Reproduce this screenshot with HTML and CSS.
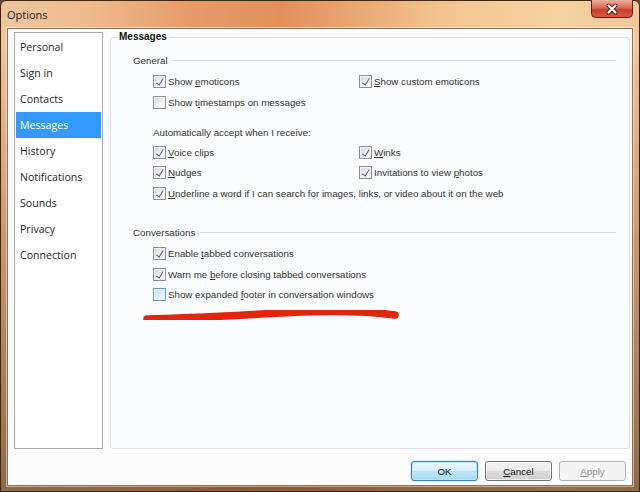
FILE: index.html
```html
<!DOCTYPE html>
<html lang="en">
<head>
  <meta charset="UTF-8">
  <title>Options</title>
  <link rel="stylesheet" href="styles.css">
</head>
<body>

<div class="window">
  <div class="titlebar">
    <span class="title">Options</span>
    <svg class="close-btn" width="42" height="18" viewBox="0 0 42 18">
      <defs>
        <linearGradient id="closeGrad" x1="0" y1="0" x2="0" y2="1">
          <stop offset="0" stop-color="#eab2a2"/>
          <stop offset="0.45" stop-color="#d86a55"/>
          <stop offset="0.55" stop-color="#c8412c"/>
          <stop offset="1" stop-color="#d9593c"/>
        </linearGradient>
      </defs>
      <path d="M0.5 0 V13.5 Q0.5 17.5 4.5 17.5 H37.5 Q41.5 17.5 41.5 13.5 V0" fill="url(#closeGrad)" stroke="#5e2418"/>
      <path d="M17.5 5.5 L24.5 12.5 M24.5 5.5 L17.5 12.5" stroke="#4a1d15" stroke-width="4" stroke-linecap="round"/>
      <path d="M17.5 5.5 L24.5 12.5 M24.5 5.5 L17.5 12.5" stroke="#ffffff" stroke-width="2.2" stroke-linecap="round"/>
    </svg>
  </div>

  <div class="client">
    <div class="main">
      <ul class="sidebar">
        <li>Personal</li>
        <li>Sign in</li>
        <li>Contacts</li>
        <li class="selected">Messages</li>
        <li>History</li>
        <li>Notifications</li>
        <li>Sounds</li>
        <li>Privacy</li>
        <li>Connection</li>
      </ul>

      <fieldset class="panel">
        <legend>Messages</legend>

        <div class="section-head">General</div>
        <div class="options">
          <div class="grid2">
            <label class="row"><span class="cb checked"></span><span>Show <u>e</u>moticons</span></label>
            <label class="row"><span class="cb checked"></span><span><u>S</u>how custom emoticons</span></label>
          </div>
          <label class="row"><span class="cb"></span><span>Show t<u>i</u>mestamps on messages</span></label>

          <div class="row note">Automatically accept when I receive:</div>
          <div class="grid2">
            <label class="row"><span class="cb checked"></span><span><u>V</u>oice clips</span></label>
            <label class="row"><span class="cb checked"></span><span><u>W</u>inks</span></label>
            <label class="row"><span class="cb checked"></span><span><u>N</u>udges</span></label>
            <label class="row"><span class="cb checked"></span><span>Invitations to view <u>p</u>hotos</span></label>
          </div>
          <label class="row"><span class="cb checked"></span><span><u>U</u>nderline a word if I can search for images, links, or video about it on the web</span></label>
        </div>

        <div class="section-head second">Conversations</div>
        <div class="options">
          <label class="row"><span class="cb checked"></span><span>Enable <u>t</u>abbed conversations</span></label>
          <label class="row"><span class="cb checked"></span><span>Warn me <u>b</u>efore closing tabbed conversations</span></label>
          <label class="row"><span class="cb hover"></span><span>Show expanded <u>f</u>ooter in conversation windows</span></label>
        </div>
      </fieldset>
    </div>

    <div class="buttons">
      <button class="btn default">OK</button>
      <button class="btn"><u>C</u>ancel</button>
      <button class="btn" disabled><u>A</u>pply</button>
    </div>
  </div>

  <!-- red marker stroke drawn over the dialog -->
  <svg class="marker" width="262" height="22" viewBox="0 0 262 22">
    <defs>
      <filter id="soft"><feGaussianBlur stdDeviation="0.7"/></filter>
    </defs>
    <path d="M6 14 C 50 13, 100 10, 140 8 S 225 6, 254 10" fill="none" stroke="#e2250d" stroke-width="7.5" stroke-linecap="round" filter="url(#soft)"/>
  </svg>
</div>

</body>
</html>
```

FILE: styles.css
```css
* { box-sizing: border-box; }
body { margin: 0; width: 640px; height: 492px; overflow: hidden; background: #6b4a2e; font-family: "Liberation Sans", Arial, sans-serif; }

.window {
  position: relative;
  width: 640px; height: 492px;
  display: flex; flex-direction: column;
  padding: 0 6px 5px 6px;
  border: 1px solid #3a2718;
  border-radius: 6px 6px 0 0;
  background:
    linear-gradient(to bottom, rgba(0,0,0,0) 40px, rgba(150,90,60,0.35) 200px, rgba(110,75,40,0.75) 100%),
    linear-gradient(to right, #efc6a0 0, #eebb8d 90px, #e69c69 190px, #e38f5b 280px, #eaa672 350px, #f2c590 440px, #f5d3a1 560px, #f1c79c 640px);
}

.titlebar { height: 27px; display: flex; justify-content: space-between; align-items: flex-start; }
.title { margin-top: 7px; font-family: "Open Sans", sans-serif; font-size: 11px; line-height: 14px; color: #1b1b1b; }
.close-btn { margin-top: -1px; display: block; }

.client {
  flex: 1;
  display: flex; flex-direction: column;
  padding: 3px 2px 4px 6px;
  background: #fcfcfc;
  border: 1px solid #8a7258;
  box-shadow: 0 0 0 1px rgba(255,255,255,0.45);
}

.main { flex: 1; display: flex; gap: 7px; min-height: 0; }

.sidebar {
  width: 89px; margin: 0; padding: 1px 0 0; list-style: none;
  background: #fff; border: 1px solid #a7a9ad;
  font-family: "Open Sans", sans-serif; font-size: 10.6px; color: #1e1e1e;
}
.sidebar li { height: 26px; line-height: 26px; margin: 0 1px; padding-left: 4px; }
.sidebar li.selected { background: #3399ff; color: #fff; }

.panel {
  flex: 1; min-width: 0; margin: 0;
  padding: 8px 13px 0 22px;
  border: 1px solid #dde3e9; border-radius: 3px;
  background: #fbfcfd;
  font-size: 9.75px; color: #333;
}
.panel legend {
  margin-left: -16px; padding: 0 2px;
  font-size: 10px; line-height: 10px; font-weight: bold; color: #111;
}

.section-head { display: flex; align-items: center; gap: 5px; height: 20px; margin-bottom: 1.5px; }
.section-head::after { content: ""; flex: 1; height: 1px; background: #d3dce2; }
.section-head.second { margin-top: 18.5px; }

.options { padding-left: 20px; }
.grid2 { display: grid; grid-template-columns: 206px 1fr; }
.row { display: flex; align-items: center; height: 20.5px; white-space: nowrap; }
.row.note { height: 20px; margin: 9.5px 0 0; }
.row u { text-decoration-thickness: 1px; text-underline-offset: 1px; }

.cb {
  position: relative;
  width: 13px; height: 13px; margin-right: 2px; flex: none;
  border: 1px solid #8e8f8f;
  background: linear-gradient(135deg, #d6d6d6 0, #eeeeee 55%, #fbfbfb 100%);
  box-shadow: inset 0 0 0 1px #f3f3f3;
}
.cb.checked::after {
  content: "";
  position: absolute; left: 4px; top: 1px;
  width: 2.5px; height: 6.5px;
  border: solid #4a5c9e; border-width: 0 1.6px 1.6px 0;
  transform: rotate(32deg);
}
.cb.hover {
  border-color: #5b9bc7;
  background: linear-gradient(135deg, #c6e4f6 0, #def0fb 55%, #f1f9fe 100%);
  box-shadow: inset 0 0 0 1px #e9f5fd;
}

.buttons { display: flex; justify-content: flex-end; gap: 7px; margin: 12px 4px 0 0; height: 20px; }
.btn {
  width: 67px; height: 20px; padding: 0;
  font-family: "Liberation Sans", Arial, sans-serif; font-size: 9.75px; color: #111;
  border: 1px solid #707070; border-radius: 3px;
  background: linear-gradient(to bottom, #f3f3f3 0, #ebebeb 50%, #dddddd 51%, #cfcfcf 100%);
  box-shadow: inset 0 0 0 1px rgba(255,255,255,0.7);
}
.btn.default {
  border-color: #3c7fb1;
  background: linear-gradient(to bottom, #eaf6fd 0, #d9f0fc 50%, #bee6fd 51%, #a7d9f5 100%);
  box-shadow: inset 0 0 0 1px #bfe5f8, 0 0 2px #7ec3ee;
}
.btn:disabled { color: #8f8f8f; border-color: #adb2b5; background: #f4f4f4; box-shadow: none; }

.marker { position: absolute; left: 140px; top: 304px; }
```
